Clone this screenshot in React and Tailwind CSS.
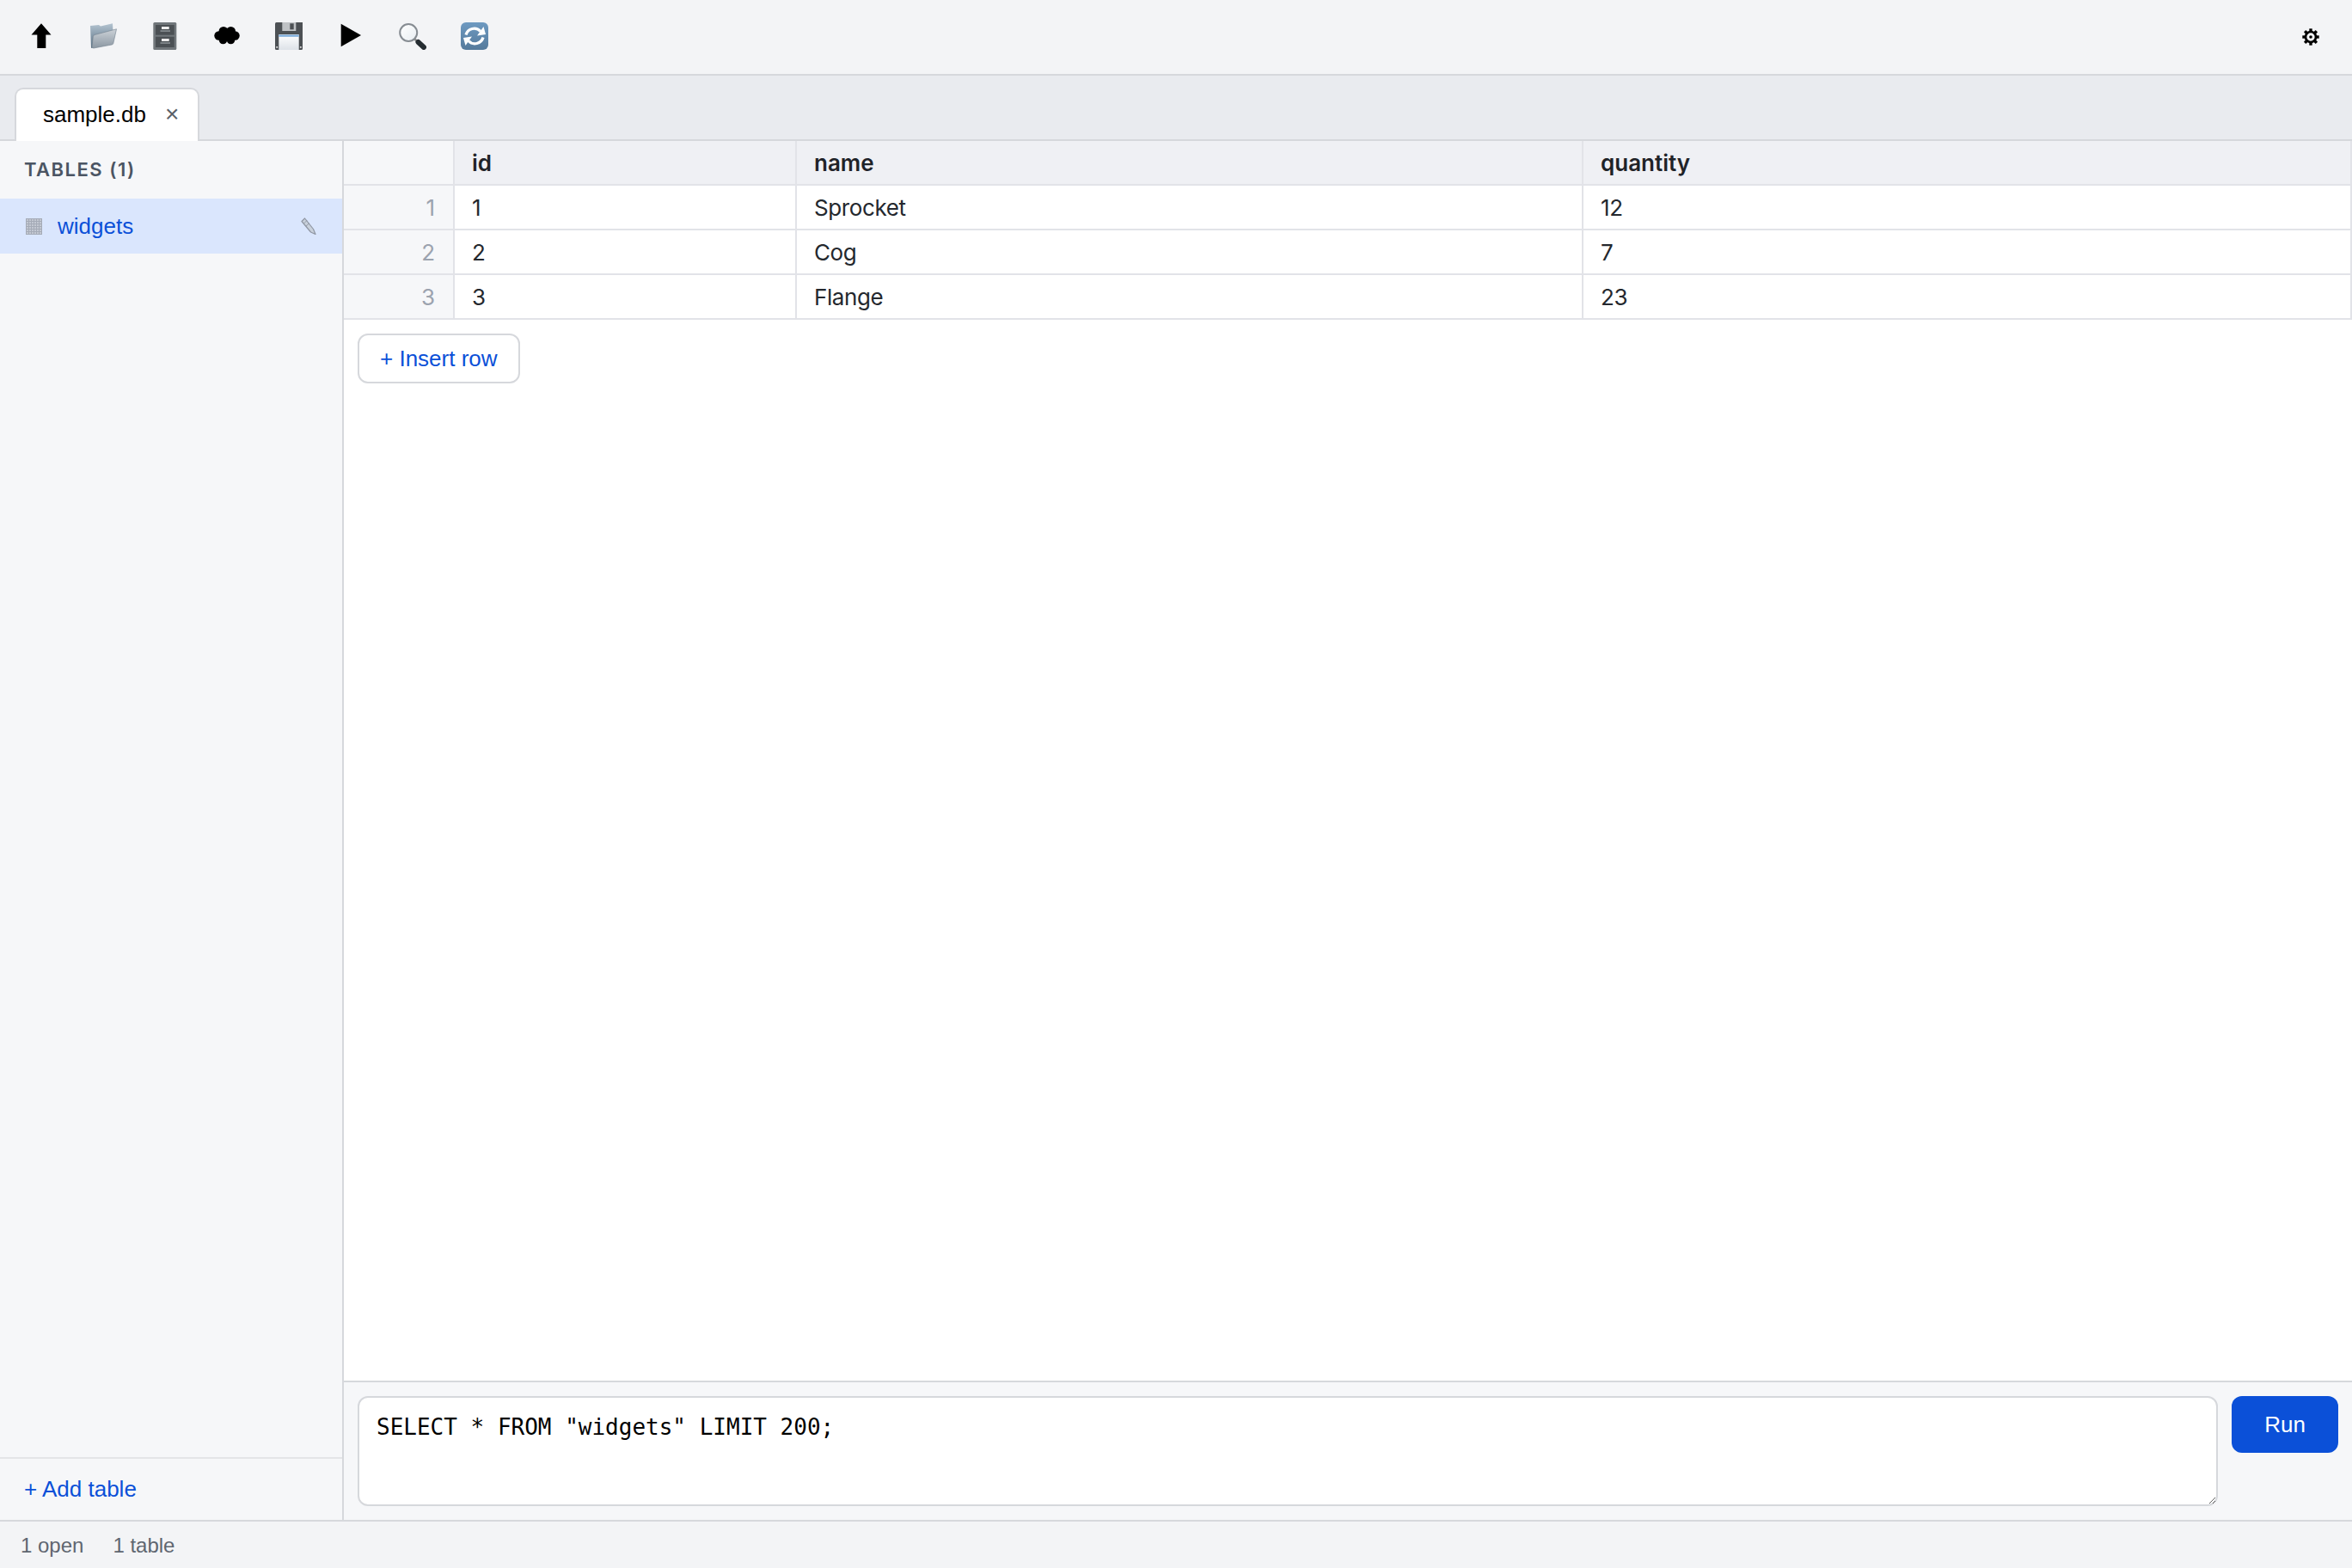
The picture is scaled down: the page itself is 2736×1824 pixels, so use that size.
const SANS = "font-['Liberation_Sans',Arial,sans-serif]";
const INTER = "font-['Inter','Liberation_Sans',sans-serif]";

function ArrowUpIcon() {
  return (
    <svg width="32" height="32" viewBox="0 0 32 32">
      <path d="M16 1.300 L27.500 14.500 L21.300 14.500 L21.300 30 L11.300 30 L11.300 14.500 L4.500 14.500 Z" fill="#000" />
    </svg>
  );
}

function FolderIcon() {
  return (
    <svg width="32" height="32" viewBox="0 0 32 32">
      <defs>
        <linearGradient id="fb" x1="0" y1="0" x2="0" y2="1">
          <stop offset="0" stopColor="#b4c4d1" />
          <stop offset="1" stopColor="#566d80" />
        </linearGradient>
        <linearGradient id="ff" x1="0" y1="0" x2="0" y2="1">
          <stop offset="0" stopColor="#ccd2d8" />
          <stop offset="1" stopColor="#8b97a2" />
        </linearGradient>
      </defs>
      <path d="M1 4 L11 3 L13 4.500 L27 1.300 L27.500 11 L5 29 L2 30 Z" fill="url(#fb)" />
      <path d="M6 14.500 L31.500 7.800 L27.800 24.500 Q27.500 25.800 26 26 L5 30 Q2.800 30.300 3 28 L4.300 16.500 Q4.600 15 6 14.500 Z" fill="url(#ff)" stroke="#71808d" strokeWidth="0.600" />
    </svg>
  );
}

function CabinetIcon() {
  return (
    <svg width="32" height="32" viewBox="0 0 32 32">
      <rect x="2.300" y="0" width="27" height="32" rx="1.500" fill="#70767a" />
      <rect x="5" y="3" width="21.700" height="11.700" fill="#4b5054" />
      <rect x="5" y="16.700" width="21.700" height="12.300" fill="#4b5054" />
      <rect x="12" y="5" width="8.700" height="3" fill="#ececec" />
      <rect x="12" y="19" width="8.700" height="3" fill="#ececec" />
      <rect x="10.500" y="9.300" width="11.500" height="1.500" fill="#8d9397" />
      <rect x="10.500" y="23.300" width="11.500" height="1.500" fill="#8d9397" />
    </svg>
  );
}

function CloudIcon() {
  return (
    <svg width="32" height="32" viewBox="0 0 32 32">
      <g fill="#000">
        <circle cx="6.500" cy="15.500" r="5.200" />
        <circle cx="12" cy="10.500" r="5.500" />
        <circle cx="20.500" cy="10.500" r="5.500" />
        <circle cx="25.500" cy="15.500" r="5.200" />
        <circle cx="11.500" cy="20.500" r="4.800" />
        <circle cx="20.500" cy="20.500" r="4.800" />
        <circle cx="16" cy="15" r="6.500" />
      </g>
    </svg>
  );
}

function FloppyIcon() {
  return (
    <svg width="32" height="32" viewBox="0 0 32 32">
      <defs>
        <linearGradient id="sl" x1="0" y1="0" x2="0" y2="1">
          <stop offset="0" stopColor="#ffffff" />
          <stop offset="1" stopColor="#dde2e8" />
        </linearGradient>
      </defs>
      <path d="M0 1.500 Q0 0 1.500 0 L32 0 L32 30.500 Q32 32 30.500 32 L1.500 32 Q0 32 0 30.500 Z" fill="#4c5054" />
      <rect x="8.300" y="0" width="16" height="10" fill="#bfc2c5" />
      <rect x="17.300" y="1.300" width="4.400" height="7" fill="#4c5054" />
      <rect x="4.300" y="14" width="23.400" height="18" fill="url(#sl)" />
      <rect x="4.300" y="14.500" width="23.400" height="2.200" fill="#76a7d8" />
      <rect x="1.300" y="28" width="1.800" height="1.800" fill="#dcdcdc" />
      <rect x="28.900" y="28" width="1.800" height="1.800" fill="#dcdcdc" />
    </svg>
  );
}

function PlayIcon() {
  return (
    <svg width="32" height="32" viewBox="0 0 32 32">
      <path d="M4.700 1.700 L28 15 L4.700 28.300 Z" fill="#000" />
    </svg>
  );
}

function SearchIcon() {
  return (
    <svg width="32" height="32" viewBox="0 0 32 32">
      <defs>
        <linearGradient id="ln" x1="0" y1="0" x2="1" y2="1">
          <stop offset="0" stopColor="#ffffff" />
          <stop offset="1" stopColor="#e8edf1" />
        </linearGradient>
      </defs>
      <circle cx="11.200" cy="12" r="10" fill="url(#ln)" stroke="#868c92" strokeWidth="2" />
      <path d="M18.500 19.500 L22 23" stroke="#8a8a8a" strokeWidth="2.500" />
      <path d="M22.500 23 L29 29" stroke="#252c31" strokeWidth="6" strokeLinecap="round" />
    </svg>
  );
}

function RefreshIcon() {
  return (
    <svg width="32" height="32" viewBox="0 0 32 32">
      <defs>
        <linearGradient id="rb" x1="0" y1="0" x2="0" y2="1">
          <stop offset="0" stopColor="#6e9ac1" />
          <stop offset="1" stopColor="#557a9b" />
        </linearGradient>
      </defs>
      <rect x="0" y="0" width="32" height="32" rx="6" fill="url(#rb)" />
      <path d="M6 14.500 A10 10 0 0 1 23 10.500" fill="none" stroke="#fff" strokeWidth="3.300" />
      <path d="M19 15.500 L29 14 L26.500 5 Z" fill="#fff" />
      <path d="M26 17.500 A10 10 0 0 1 9 21.500" fill="none" stroke="#fff" strokeWidth="3.300" />
      <path d="M13 16.500 L3 18 L5.500 27 Z" fill="#fff" />
    </svg>
  );
}

function GearIcon() {
  const teeth = [0, 45, 90, 135, 180, 225, 270, 315];
  return (
    <svg width="20" height="20" viewBox="0 0 20 20">
      {teeth.map((a) => (
        <rect key={a} x="8.300" y="0.300" width="3.400" height="4" fill="#000" transform={`rotate(${a} 10 10)`} />
      ))}
      <circle cx="10" cy="10" r="6" fill="#f3f4f6" stroke="#000" strokeWidth="2.700" />
      <circle cx="10" cy="10" r="1.800" fill="#000" />
    </svg>
  );
}

function GridIcon() {
  return (
    <svg width="19" height="19" viewBox="0 0 19 19">
      <rect x="0" y="0" width="19" height="19" fill="#c3c8d2" />
      <path d="M0.500 0V19M3.500 0V19M6.500 0V19M9.500 0V19M12.500 0V19M15.500 0V19M18.500 0V19M0 0.500H19M0 3.500H19M0 6.500H19M0 9.500H19M0 12.500H19M0 15.500H19M0 18.500H19" stroke="#a5abb7" strokeWidth="1" />
    </svg>
  );
}

function PencilIcon() {
  return (
    <svg width="18" height="20" viewBox="0 0 18 20">
      <path d="M1 4.500 L4.500 1 L14.500 13.500 L17 19.500 L11.500 17 Z" fill="#c9d1dc" stroke="#8f96a3" strokeWidth="1.200" strokeLinejoin="round" />
      <path d="M3.500 7 L7 3.500 M6 10 L10 6.500" stroke="#8f96a3" strokeWidth="0.900" />
    </svg>
  );
}

const toolbarIcons = [ArrowUpIcon, FolderIcon, CabinetIcon, CloudIcon, FloppyIcon, PlayIcon, SearchIcon, RefreshIcon];

const rows = [
  ["1", "1", "Sprocket", "12"],
  ["2", "2", "Cog", "7"],
  ["3", "3", "Flange", "23"],
];

const headCell = "border-b-2 border-r-2 border-[#e2e3e8] px-[20px] text-left text-[26px] font-semibold text-[#1f2328]";
const bodyCell = "border-b-2 border-r-2 border-[#e2e3e8] px-[20px] text-[26px] tracking-[-0.400px] text-[#24282e]";

export default function App() {
  return (
    <div className={`flex h-[1824px] w-[2736px] flex-col overflow-hidden bg-white text-[26px] text-[#1f2328] ${SANS}`}>
      <header className="flex h-[88px] shrink-0 items-center justify-between border-b-2 border-[#d6d8dc] bg-[#f3f4f6] pl-[12px] pr-[38px]">
        <div className="flex items-center">
          {toolbarIcons.map((Icon, i) => (
            <button key={i} className="flex h-[72px] w-[72px] items-center justify-center pb-[2px]">
              <Icon />
            </button>
          ))}
        </div>
        <button className="flex items-center justify-center"><GearIcon /></button>
      </header>

      <div className="flex h-[76px] shrink-0 items-end border-b-2 border-[#d6d8dc] bg-[#e9ebef] pl-[17px]">
        <div className="relative -mb-[2px] flex h-[62px] w-[215px] items-center rounded-t-[10px] border-2 border-b-0 border-[#d6d8dc] bg-white pb-[2px] pl-[31px] text-black">
          <span>sample.db</span>
          <span className="ml-[22px] text-[28px] leading-none text-[#5b6068]">×</span>
        </div>
      </div>

      <div className="flex min-h-0 flex-1">
        <aside className="flex w-[400px] shrink-0 flex-col border-r-2 border-[#d6d8dc] bg-[#f6f7f9]">
          <div className={`flex h-[67px] items-center pl-[28px] text-[22px] font-semibold tracking-[1.500px] text-[#4b5563] ${INTER}`}>TABLES (1)</div>
          <div className="flex h-[64px] items-center bg-[#dae6fd] pl-[30px] pr-[30px] text-[#0b50d8]">
            <GridIcon />
            <span className="ml-[18px] flex-1 pt-[1px]">widgets</span>
            <PencilIcon />
          </div>
          <div className="flex-1" />
          <div className="flex h-[73px] items-center border-t-2 border-[#e4e5e8] pl-[28px] text-[#0b50d8]">+ Add table</div>
        </aside>

        <main className="flex min-w-0 flex-1 flex-col">
          <div className="min-h-0 flex-1">
            <table className={`w-[2336px] table-fixed border-separate border-spacing-0 ${INTER}`}>
              <colgroup>
                <col className="w-[129px]" />
                <col className="w-[398px]" />
                <col className="w-[915px]" />
                <col className="w-[894px]" />
              </colgroup>
              <thead>
                <tr className="h-[52px] bg-[#eff0f4]">
                  <th className="border-b-2 border-r-2 border-[#e2e3e8] bg-[#f6f7f9]" />
                  {["id", "name", "quantity"].map((h) => (
                    <th key={h} className={headCell}>{h}</th>
                  ))}
                </tr>
              </thead>
              <tbody>
                {rows.map((r) => (
                  <tr key={r[0]} className="h-[52px]">
                    <td className="border-b-2 border-r-2 border-[#e2e3e8] bg-[#f6f7f9] pl-[20px] pr-[21px] pt-[1px] text-right text-[26px] text-[#9ca3af]">{r[0]}</td>
                    <td className={bodyCell}>{r[1]}</td>
                    <td className={bodyCell}>{r[2]}</td>
                    <td className={bodyCell}>{r[3]}</td>
                  </tr>
                ))}
              </tbody>
            </table>
            <button className="ml-[16px] mt-[16px] flex h-[58px] items-center justify-center rounded-[12px] border-2 border-[#d6d8dc] bg-white px-[24px] text-[#0b50d8]">+ Insert row</button>
          </div>

          <div className="flex h-[162px] shrink-0 gap-[16px] border-t-2 border-[#d6d8dc] bg-[#f6f7f9] p-[16px]">
            <textarea
              readOnly
              defaultValue={'SELECT * FROM "widgets" LIMIT 200;'}
              className="h-[128px] flex-1 rounded-[12px] border-2 border-[#d6d8dc] bg-white px-[20px] py-[18px] font-['DejaVu_Sans_Mono',monospace] text-[26px] leading-[32px] text-black outline-none"
            />
            <button className="h-[66px] w-[124px] rounded-[12px] bg-[#0b50d8] text-white">Run</button>
          </div>
        </main>
      </div>

      <footer className="flex h-[56px] shrink-0 items-center gap-[34px] border-t-2 border-[#d6d8dc] bg-[#f3f4f6] pl-[24px] pt-[2px] text-[24px] text-[#5f6670]">
        <span>1 open</span>
        <span>1 table</span>
      </footer>
    </div>
  );
}
